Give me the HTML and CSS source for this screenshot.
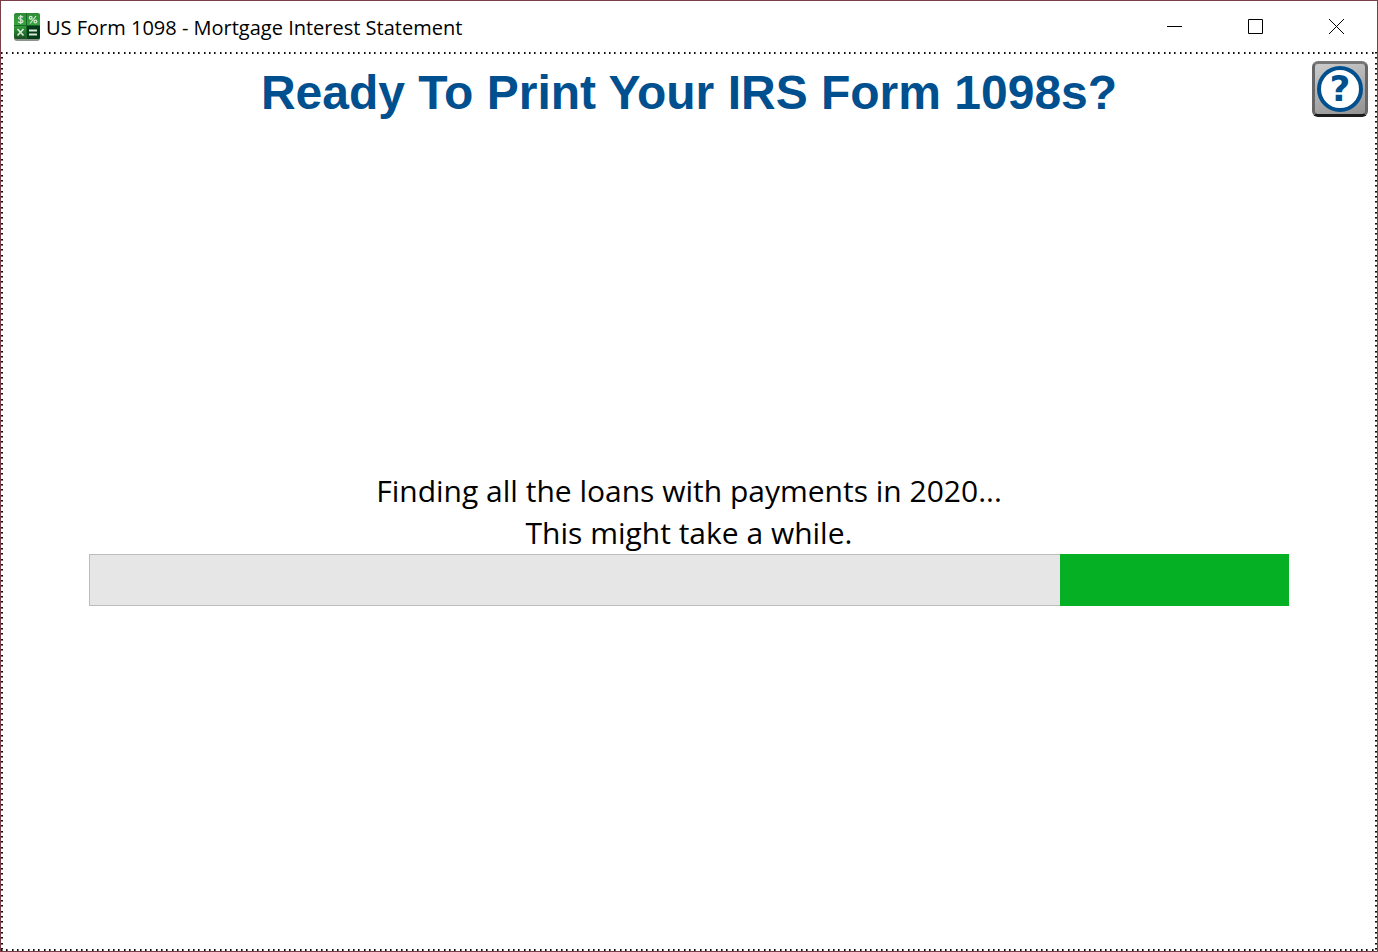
FILE: index.html
```
<!DOCTYPE html>
<html lang="en">
<head>
    <meta charset="UTF-8">
    <meta name="viewport" content="width=device-width, initial-scale=1.0">
    <title>US Form 1098 - Mortgage Interest Statement</title>
    <link rel="stylesheet" href="styles.css">
</head>
<body>
    <div class="window">
        <header class="title-bar">
            <svg class="app-icon" width="26" height="28" viewBox="0 0 26 28" aria-hidden="true">
                <defs>
                    <linearGradient id="tile" x1="0" y1="0" x2="0" y2="1">
                        <stop offset="0" stop-color="#2f8a35"/>
                        <stop offset="0.45" stop-color="#35a63c"/>
                        <stop offset="1" stop-color="#1c4f22"/>
                    </linearGradient>
                </defs>
                <rect x="0" y="1" width="26" height="27" rx="3" fill="#8c948c"/>
                <rect x="0" y="0" width="26" height="26" rx="2" fill="url(#tile)"/>
                <path d="M13 13h13v11a2 2 0 0 1-2 2H13z" fill="#043d18"/>
                <path d="M12.5 0v26M0 12.5h26" stroke="#17682a" stroke-width="1"/>
                <g fill="none" stroke="#d9ead9" stroke-width="1.2">
                    <path d="M9 4.2C7.500 3 4.500 3.200 4.500 5S9 6.300 9 8.200 5.500 10 4 8.800M6.700 2v9"/>
                    <path d="M22 3l-6 7.500"/>
                    <circle cx="16.700" cy="4.800" r="1.400"/>
                    <circle cx="21.400" cy="8.600" r="1.400"/>
                    <path d="M3.500 16l6 6.500M9.500 16l-6 6.500" stroke-width="1.700"/>
                    <path d="M15 17.500h8M15 21.500h8" stroke-width="2"/>
                </g>
            </svg>
            <span class="title">US Form 1098 - Mortgage Interest Statement</span>
            <div class="controls">
                <button type="button" aria-label="Minimize">
                    <svg width="15" height="15" viewBox="0 0 15 15"><path d="M0 7.5h15"/></svg>
                </button>
                <button type="button" aria-label="Maximize">
                    <svg width="15" height="15" viewBox="0 0 15 15"><path d="M.5.5h14v14H.5z"/></svg>
                </button>
                <button type="button" aria-label="Close">
                    <svg width="15" height="15" viewBox="0 0 15 15"><path d="M0 0l15 15M15 0L0 15"/></svg>
                </button>
            </div>
        </header>

        <main class="content">
            <h1>Ready To Print Your IRS Form 1098s?</h1>
            <button type="button" class="help" aria-label="Help"><span>?</span></button>

            <div class="status">
                <label for="loanProgress">Finding all the loans with payments in 2020...<br>This might take a while.</label>
                <progress id="loanProgress"></progress>
            </div>
        </main>
    </div>
</body>
</html>
```

FILE: styles.css
```
* {
    box-sizing: border-box;
}

body {
    margin: 0;
    font-family: "Open Sans", "Noto Sans", sans-serif;
    color: #000;
    background-color: #fff;
}

.window {
    display: flex;
    flex-direction: column;
    min-height: 100vh;
    border: 1px solid #7b3f47;
}

/* Title bar */
.title-bar {
    display: flex;
    align-items: center;
    height: 51px;
    padding-left: 13px;
}

.app-icon {
    margin-right: 6px;
}

.title {
    padding-top: 2px;
    font-size: 20px;
    line-height: 28px;
}

.controls {
    display: flex;
    align-self: stretch;
    margin-left: auto;
}

.controls button {
    display: flex;
    align-items: center;
    justify-content: center;
    width: 81px;
    padding: 0;
    border: none;
    background: none;
}

.controls svg {
    fill: none;
    stroke: #000;
    stroke-width: 1;
}

/* Client area with dotted focus frame */
.content {
    --dots: #111 0 1px, #777 1px 2px, transparent 2px 5px, #111 5px 6px, #777 6px 7px, transparent 7px 11px, #111 11px 12px, #777 12px 13px, transparent 13px 16px;
    position: relative;
    display: flex;
    flex: 1;
    flex-direction: column;
    padding: 9px 88px 0;
    background:
        repeating-linear-gradient(to right, var(--dots)) top / 100% 2px no-repeat,
        repeating-linear-gradient(to right, var(--dots)) bottom / 100% 2px no-repeat,
        repeating-linear-gradient(to bottom, var(--dots)) left / 2px 100% no-repeat,
        repeating-linear-gradient(to bottom, var(--dots)) right / 2px 100% no-repeat;
}

h1 {
    margin: 0;
    font-family: "Liberation Sans", Arial, sans-serif;
    font-size: 48px;
    line-height: 64px;
    text-align: center;
    color: #00508f;
}

.help {
    position: absolute;
    top: 9px;
    right: 9px;
    display: flex;
    align-items: center;
    justify-content: center;
    width: 56px;
    height: 56px;
    padding: 0;
    border: 3px solid;
    border-color: #777 #666 #1c1c1c #666;
    border-radius: 6px;
    background: linear-gradient(160deg, #ccc, #929292);
}

.help span {
    width: 46px;
    height: 46px;
    border: 4px solid #00508f;
    border-radius: 50%;
    font-family: "DejaVu Sans", sans-serif;
    font-size: 36px;
    font-weight: bold;
    line-height: 38px;
    color: #00508f;
    background-color: #fff;
}

/* Progress */
.status {
    display: flex;
    flex: 1;
    flex-direction: column;
    justify-content: center;
    text-align: center;
}

.status label {
    font-size: 30px;
    line-height: 42px;
}

progress {
    display: block;
    width: 100%;
    height: 52px;
    border: none;
    appearance: none;
    background: none;
}

progress::-webkit-progress-bar {
    border: 1px solid transparent;
    background:
        linear-gradient(#06b025, #06b025) right / 19.1% 100% no-repeat border-box,
        linear-gradient(#e6e6e6, #e6e6e6) padding-box,
        linear-gradient(#bcbcbc, #bcbcbc) border-box;
}
```
